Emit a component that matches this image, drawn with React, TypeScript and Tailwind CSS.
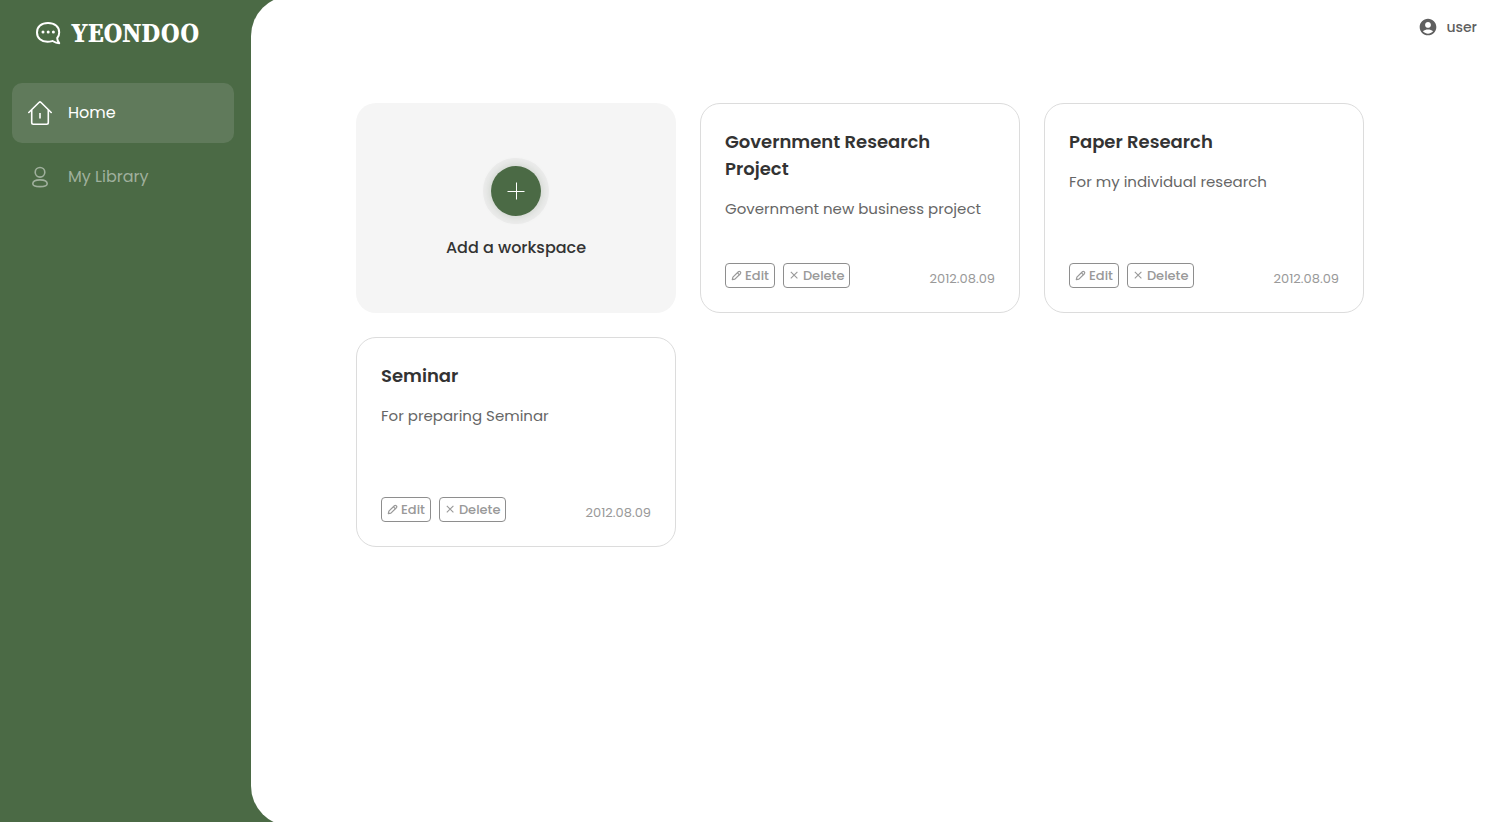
import React from "react";

type Workspace = { title: string; description: string; date: string };

const workspaces: Workspace[] = [
  { title: "Government Research Project", description: "Government new business project", date: "2012.08.09" },
  { title: "Paper Research", description: "For my individual research", date: "2012.08.09" },
  { title: "Seminar", description: "For preparing Seminar", date: "2012.08.09" },
];

function ChatIcon() {
  return (
    <svg width="26" height="24" viewBox="0 0 26 24" fill="none" stroke="currentColor" strokeWidth="2" strokeLinejoin="round" aria-hidden="true">
      <path d="M13 2C6.400 2 2 5.800 2 11.400C2 17 6.400 20.800 12.500 20.800C14.600 20.800 16 20.400 17.600 20C19.800 21.400 21.800 22.200 24.200 22.200C22.900 20.600 22.200 18.800 22.200 17C23.600 15.400 24.200 13.600 24.200 11.400C24.200 5.800 19.600 2 13 2Z" />
      <g fill="currentColor" stroke="none">
        <circle cx="8" cy="11" r="1.500" />
        <circle cx="13.200" cy="11" r="1.500" />
        <circle cx="18.400" cy="11" r="1.500" />
      </g>
    </svg>
  );
}

function HomeIcon() {
  return (
    <svg width="24" height="24" viewBox="0 0 24 24" fill="none" stroke="currentColor" strokeWidth="1.600" strokeLinecap="round" strokeLinejoin="round" aria-hidden="true">
      <path d="M0.800 11.500L11.200 1.300Q12 0.600 12.800 1.300L23.200 11.500" />
      <path d="M3.700 9.200V21.500Q3.700 23.200 5.400 23.200H18.600Q20.300 23.200 20.300 21.500V9.200" />
      <path d="M12 12V17.500" strokeLinecap="butt" />
    </svg>
  );
}

function PersonIcon() {
  return (
    <svg width="24" height="24" viewBox="0 0 24 24" fill="none" stroke="currentColor" strokeWidth="1.600" aria-hidden="true">
      <circle cx="12" cy="7.300" r="4.800" />
      <path d="M4.800 18.800C4.800 16.200 8 14.900 12 14.900S19.200 16.200 19.200 18.800C19.200 21.200 16 21.600 12 21.600S4.800 21.200 4.800 18.800Z" />
    </svg>
  );
}

function AccountIcon() {
  return (
    <svg width="20" height="20" viewBox="0 0 24 24" fill="currentColor" aria-hidden="true">
      <path d="M12 2C6.480 2 2 6.480 2 12s4.480 10 10 10 10-4.480 10-10S17.520 2 12 2zm0 4c1.930 0 3.500 1.570 3.500 3.500S13.930 13 12 13s-3.500-1.570-3.500-3.500S10.070 6 12 6zm0 14c-2.030 0-4.430-.820-6.140-2.880C7.550 15.800 9.680 15 12 15s4.450.800 6.140 2.120C16.430 19.180 14.030 20 12 20z" />
    </svg>
  );
}

function PencilIcon() {
  return (
    <svg width="12" height="12" viewBox="0 0 12 12" fill="none" stroke="currentColor" strokeWidth="1.200" strokeLinejoin="round" aria-hidden="true">
      <path d="M1.300 9.600L1.900 7.100L7.400 1.700Q8.300 0.900 9.100 1.700L9.400 2Q10.200 2.800 9.400 3.700L3.900 9.100Z" />
      <path d="M6.300 2.600L8.500 4.800" />
    </svg>
  );
}

function CrossIcon() {
  return (
    <svg width="12" height="12" viewBox="0 0 12 12" fill="none" stroke="currentColor" strokeWidth="1.100" aria-hidden="true">
      <path d="M1.800 1.800L8.400 8.400M8.400 1.800L1.800 8.400" />
    </svg>
  );
}

function CardButton({ icon, label }: { icon: React.ReactNode; label: string }) {
  return (
    <button type="button" className="flex h-[25px] items-center gap-0.5 rounded border border-[#8e8e8e] px-[5px] text-[13px] font-medium text-[#999999]">
      {icon}
      {label}
    </button>
  );
}

function WorkspaceCard({ title, description, date }: Workspace) {
  return (
    <article className="flex min-h-[210px] flex-col rounded-[20px] border border-[#dcdcdc] p-6">
      <h2 className="text-lg leading-[27px] font-semibold text-[#333333]">{title}</h2>
      <p className="mt-4 text-[15px] leading-[22px] text-[#666666]">{description}</p>
      <div className="mt-auto flex items-start justify-between">
        <div className="flex gap-2">
          <CardButton icon={<PencilIcon />} label="Edit" />
          <CardButton icon={<CrossIcon />} label="Delete" />
        </div>
        <time className="pt-1.5 text-[13px] leading-[19px] text-[#999999]">{date}</time>
      </div>
    </article>
  );
}

export default function App() {
  return (
    <div className="flex min-h-screen overflow-hidden bg-[#4b6a45] font-['Poppins','Inter',sans-serif] antialiased">
      <aside className="w-[251px] shrink-0 pr-[17px] pl-3 text-white">
        <a href="#" className="flex h-[66px] items-center gap-[10px] pl-[23px]">
          <ChatIcon />
          <span className="font-['Source_Serif_4','Liberation_Serif',serif] text-[27px] leading-8 font-bold">YEONDOO</span>
        </a>
        <nav className="mt-[17px] flex flex-col gap-1">
          <a href="#home" aria-current="page" className="flex h-[60px] items-center gap-4 rounded-[10px] bg-[#607a5b] px-4">
            <HomeIcon />
            Home
          </a>
          <a href="#library" className="flex h-[60px] items-center gap-4 rounded-[10px] px-4 text-[#a0b09d]">
            <PersonIcon />
            My Library
          </a>
        </nav>
      </aside>
      <main className="-my-1 min-w-0 flex-1 rounded-l-[40px] bg-white">
        <header className="flex h-[61px] items-center justify-end pr-[23px]">
          <button type="button" className="flex items-center gap-2 text-sm font-medium text-[#5f5f5f]">
            <AccountIcon />
            user
          </button>
        </header>
        <div className="pt-[46px] pr-[55px] pl-6">
          <div className="mx-auto grid max-w-[1008px] grid-cols-1 gap-6 md:grid-cols-2 xl:grid-cols-3">
            <button type="button" className="flex min-h-[210px] flex-col items-center justify-center rounded-[20px] bg-[#f5f5f5] pt-2.5 font-medium text-[#333333]">
              <span className="flex size-[50px] items-center justify-center rounded-full bg-[#4b6a45] text-white shadow-[0_0_8px_1px_#cbd1c9,0_0_0_8px_#ececec]">
                <svg width="18" height="18" viewBox="0 0 18 18" stroke="currentColor" aria-hidden="true">
                  <path d="M9.500 0.500V17.500M0.500 9.500H17.500" />
                </svg>
              </span>
              <span className="mt-5 leading-6">Add a workspace</span>
            </button>
            {workspaces.map((workspace) => (
              <WorkspaceCard key={workspace.title} {...workspace} />
            ))}
          </div>
        </div>
      </main>
    </div>
  );
}
